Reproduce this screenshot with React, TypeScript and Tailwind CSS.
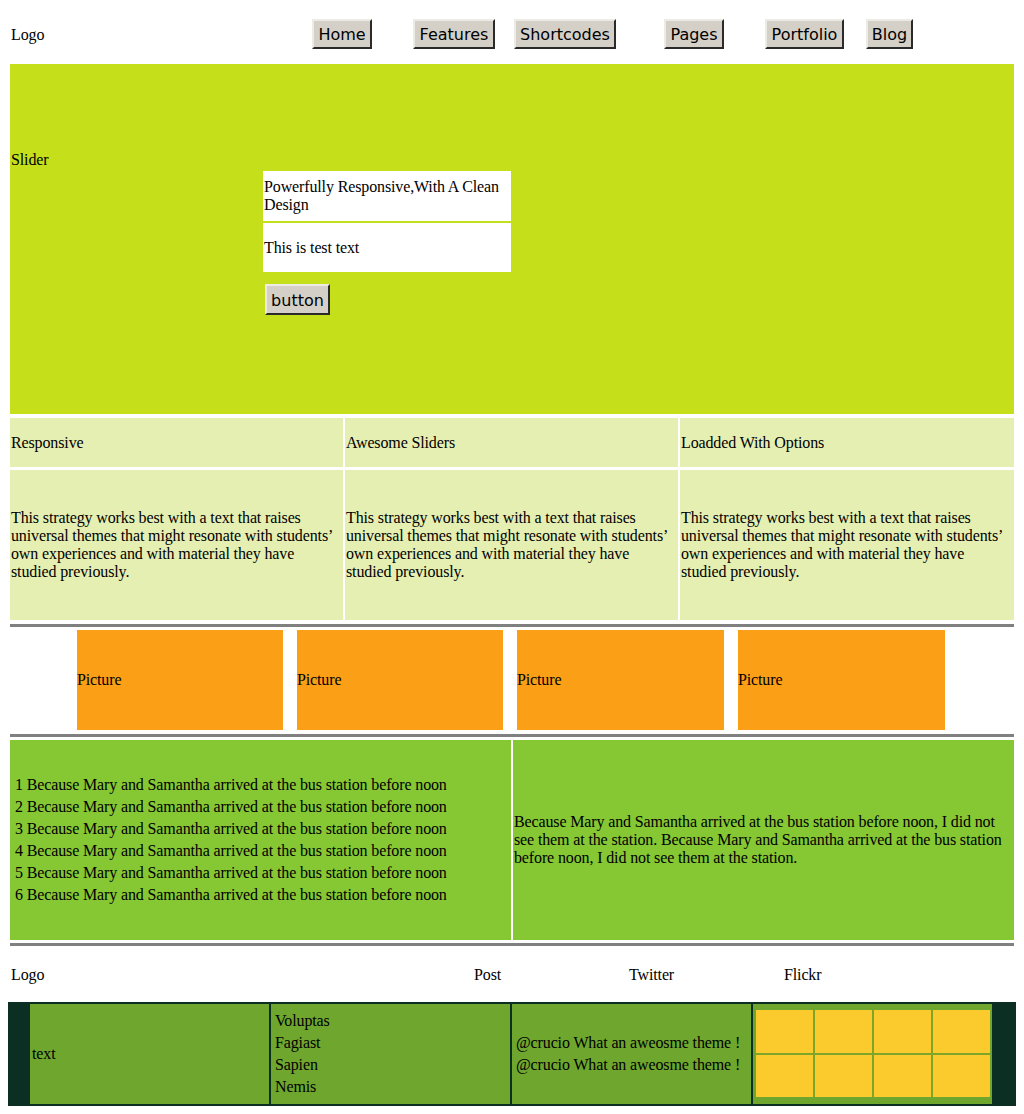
import React from 'react'

const serif = "font-['Liberation_Serif','Times_New_Roman',serif]"
const sans = "font-['DejaVu_Sans','Verdana',sans-serif]"

const navItems = [
  { label: 'Home', w: 'w-[60px]', ml: 'ml-0' },
  { label: 'Features', w: 'w-[82px]', ml: 'ml-[41px]' },
  { label: 'Shortcodes', w: 'w-[102px]', ml: 'ml-[19px]' },
  { label: 'Pages', w: 'w-[60px]', ml: 'ml-[48px]' },
  { label: 'Portfolio', w: 'w-[79px]', ml: 'ml-[41px]' },
  { label: 'Blog', w: 'w-[47px]', ml: 'ml-[22px]' },
]

const features = ['Responsive', 'Awesome Sliders', 'Loadded With Options']

const blurb =
  'This strategy works best with a text that raises universal themes that might resonate with students’ own experiences and with material they have studied previously.'

const sentence = 'Because Mary and Samantha arrived at the bus station before noon'

// old-school grey button with the raised bevel
const ClassicButton: React.FC<{ label: string; className?: string }> = ({ label, className = '' }) => (
  <button
    className={`h-[30px] bg-[#d4d0c8] border-2 border-t-[#ecebe6] border-l-[#ecebe6] border-r-[#2a2a2a] border-b-[#2a2a2a] text-[16px] leading-none tracking-normal text-black flex items-center justify-center pt-[2px] ${sans} ${className}`}
  >
    {label}
  </button>
)

const Rule = () => <div className="mx-[10px] h-[3px] bg-[#808080]" />

export default function App() {
  return (
    <div className={`w-[1024px] min-h-[1114px] bg-white text-black text-[16px] leading-[18px] tracking-[-0.13px] ${serif}`}>
      {/* Header */}
      <header className="h-16 flex items-start pt-[19px] px-[11px]">
        <div className="w-[301px] mt-[7px]">Logo</div>
        {navItems.map((n) => (
          <ClassicButton key={n.label} label={n.label} className={`${n.w} ${n.ml}`} />
        ))}
      </header>

      {/* Slider */}
      <section className="mx-[10px] h-[350px] bg-[#c5e01b] pt-[87px]">
        <p className="pl-[1px]">Slider</p>
        <div className="ml-[253px] mt-[2px] w-[248px] flex flex-col gap-[2px]">
          <div className="h-[50px] bg-white flex items-center pl-[1px]">
            Powerfully Responsive,With A Clean Design
          </div>
          <div className="h-[49px] bg-white flex items-center pl-[1px]">This is test text</div>
        </div>
        <ClassicButton label="button" className="w-[65px] h-[31px] ml-[255px] mt-[12px]" />
      </section>

      {/* Features */}
      <section className="mx-[10px] mt-[4px] grid grid-cols-[333px_333px_334px] gap-x-[2px] gap-y-[3px]">
        {features.map((f) => (
          <div key={f} className="h-[49px] bg-[#e6efb2] flex items-center pl-[1px]">
            {f}
          </div>
        ))}
        {features.map((f) => (
          <div key={f + '-body'} className="h-[150px] bg-[#e6efb2] flex items-center pl-[1px] pr-[3px]">
            <p>{blurb}</p>
          </div>
        ))}
      </section>

      <div className="h-[4px]" />
      <Rule />

      {/* Pictures */}
      <section className="flex gap-[14px] pl-[77px] py-[3px]">
        {['w-[206px]', 'w-[206px]', 'w-[207px]', 'w-[207px]'].map((w, i) => (
          <div key={i} className={`${w} h-[100px] bg-[#fa9f16] flex items-center`}>
            Picture
          </div>
        ))}
      </section>

      <div className="h-[1px]" />
      <Rule />

      {/* Text blocks */}
      <section className="mx-[10px] mt-[3px] grid grid-cols-[501px_501px] gap-x-[2px]">
        <div className="h-[200px] bg-[#86c734] flex flex-col justify-center pl-[5px]">
          {[1, 2, 3, 4, 5, 6].map((n) => (
            <div key={n} className="leading-[22px]">
              {n} {sentence}
            </div>
          ))}
        </div>
        <div className="h-[200px] bg-[#86c734] flex items-center pl-[1px]">
          <p>
            {sentence}, I did not see them at the station. {sentence}, I did not see them at the
            station.
          </p>
        </div>
      </section>

      <div className="h-[3px]" />
      <Rule />

      {/* Footer heading row */}
      <div className="h-[56px] flex items-center pt-[2px] px-[11px]">
        <span className="w-[463px]">Logo</span>
        <span className="w-[155px]">Post</span>
        <span className="w-[155px]">Twitter</span>
        <span>Flickr</span>
      </div>

      {/* Footer */}
      <footer className="mx-[8px] bg-[#0b2f22] pl-[22px] pr-[24px] py-[2px] grid grid-cols-[239px_239px_239px_239px] gap-x-[2px]">
        <div className="h-[100px] bg-[#6fa72e] flex items-center pl-[2px]">text</div>
        <div className="h-[100px] bg-[#6fa72e] flex flex-col justify-center pl-[4px]">
          {['Voluptas', 'Fagiast', 'Sapien', 'Nemis'].map((t) => (
            <div key={t} className="leading-[22px]">
              {t}
            </div>
          ))}
        </div>
        <div className="h-[100px] bg-[#6fa72e] flex flex-col justify-center pl-[4px]">
          <div className="leading-[22px]">@crucio What an aweosme theme !</div>
          <div className="leading-[22px]">@crucio What an aweosme theme !</div>
        </div>
        <div className="h-[100px] bg-[#6fa72e] pl-[3px] pr-[2px] pt-[6px] pb-[7px]">
          <div className="h-full grid grid-cols-4 grid-rows-2 gap-[2px] bg-[#7ea42a]">
            {Array.from({ length: 8 }).map((_, i) => (
              <div key={i} className="bg-[#fbcb2e]" />
            ))}
          </div>
        </div>
      </footer>
    </div>
  )
}
